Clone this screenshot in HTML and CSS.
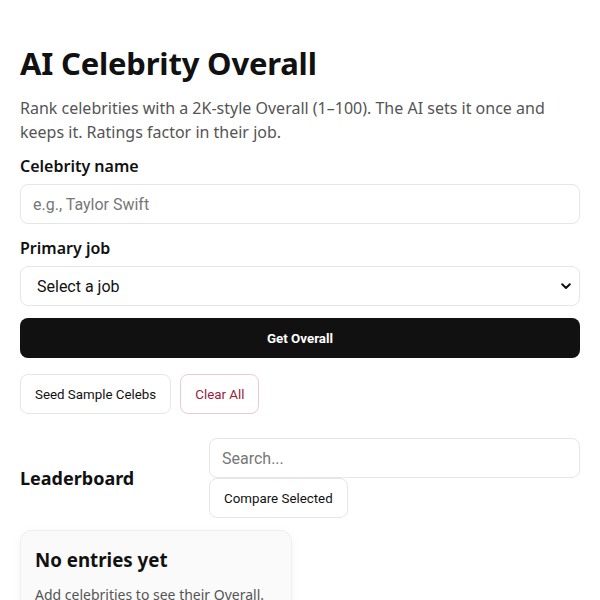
FILE: index.html
```html
<!DOCTYPE html>
<html lang="en">
<head>
<meta charset="utf-8">
<title>AI Celebrity Overall</title>
<link rel="stylesheet" href="styles.css">
</head>
<body>
<main class="app">
  <h1 class="title">AI Celebrity Overall</h1>
  <p class="lead">Rank celebrities with a 2K-style Overall (1–100). The AI sets it once and keeps it. Ratings factor in their job.</p>
  <form class="form">
    <label class="label" for="name">Celebrity name</label>
    <input class="field name" id="name" type="text" placeholder="e.g., Taylor Swift">
    <label class="label" for="job">Primary job</label>
    <div class="select-wrap">
      <select class="field select" id="job">
        <option>Select a job</option>
      </select>
      <svg class="chev" width="10" height="7" viewBox="0 0 10 7"><path d="M1.2 1.3 5 5 8.8 1.3" fill="none" stroke="#111" stroke-width="2" stroke-linecap="round" stroke-linejoin="round"/></svg>
    </div>
    <button class="primary" type="button">Get Overall</button>
  </form>
  <div class="actions">
    <button class="btn" type="button">Seed Sample Celebs</button>
    <button class="btn danger" type="button">Clear All</button>
  </div>
  <section class="board">
    <div class="board-head">
      <h2 class="board-title">Leaderboard</h2>
      <div class="tools">
        <input class="field search" type="text" placeholder="Search...">
        <button class="btn" type="button">Compare Selected</button>
      </div>
    </div>
    <div class="empty">
      <h3 class="empty-title">No entries yet</h3>
      <p class="empty-text">Add celebrities to see their Overall.</p>
    </div>
  </section>
</main>
</body>
</html>
```
FILE: styles.css
```css
* { box-sizing: border-box; }
html, body { margin: 0; padding: 0; background: #fff; }
body { font-family: "Noto Sans", "Open Sans", sans-serif; color: #111; }
.app { padding: 37px 20px 0; }
.title { margin: 0; font-size: 31px; line-height: 52px; font-weight: 700; letter-spacing: -0.2px; }
.lead { margin: 7px 0 0; font-size: 16px; line-height: 24px; color: #555; }
.form { display: flex; flex-direction: column; }
.label { display: block; margin-top: 11px; margin-bottom: 7px; font-size: 16px; line-height: 22px; font-weight: 600; }
.field {
  width: 100%; height: 40px; border: 1px solid #e6e6e6; border-radius: 8px;
  background: #fff; padding: 0 12px; font-family: Roboto, sans-serif; font-size: 16px; color: #111;
  outline: none;
}
.name { margin-bottom: 2px; }
.field::placeholder { color: #777; }
.select-wrap { position: relative; }
.select { appearance: none; -webkit-appearance: none; padding-left: 16px; }
.chev { position: absolute; right: 9px; top: 17px; pointer-events: none; }
.primary {
  margin-top: 12px; height: 40px; border: 0; border-radius: 8px; background: #111; color: #fff;
  font-family: Roboto, sans-serif; font-size: 13.33px; font-weight: 700;
}
.actions { display: flex; gap: 9px; margin-top: 16px; }
.btn {
  height: 40px; padding: 0 14px; border: 1px solid #e6e6e6; border-radius: 8px; background: #fff;
  font-family: Roboto, sans-serif; font-size: 13.33px; color: #111;
}
.danger { color: #9b1c3c; border-color: #eccad2; }
.board { margin-top: 24px; }
.board-head { display: flex; align-items: center; justify-content: space-between; }
.board-title { margin: 0; font-size: 18px; font-weight: 700; line-height: 24px; }
.tools { width: 371px; display: flex; flex-direction: column; align-items: flex-start; }
.empty {
  margin-top: 12px; width: 272px; padding: 14px 14px 20px; background: #fafafa;
  border: 1px solid #eee; border-radius: 12px; box-shadow: 0 2px 8px rgba(0,0,0,0.05);
}
.empty-title { margin: 0; font-size: 18.72px; line-height: 30px; font-weight: 700; }
.empty-text { margin: 10px 0 0; font-size: 14px; line-height: 20px; color: #555; }
```
